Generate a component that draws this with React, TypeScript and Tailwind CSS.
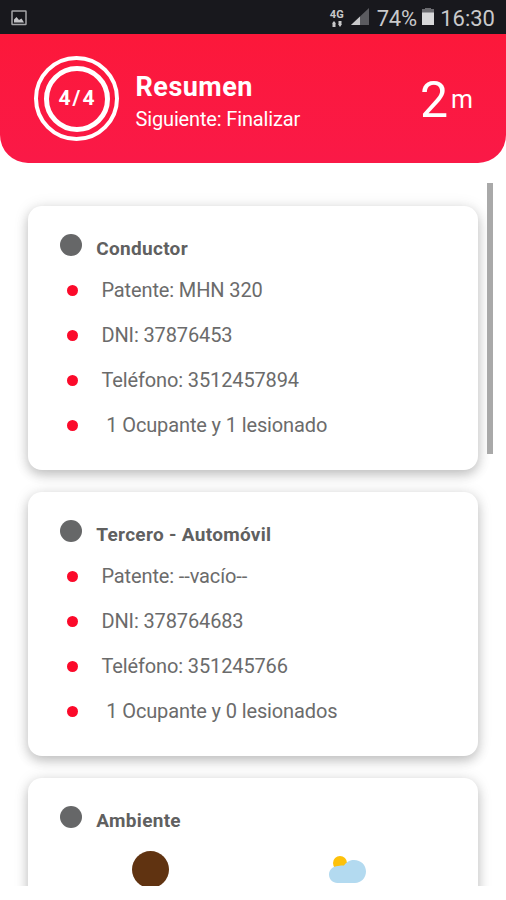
const sections = [
  {
    title: "Conductor",
    items: [
      "Patente: MHN 320",
      "DNI: 37876453",
      "Teléfono: 3512457894",
      "\u00a01 Ocupante y 1 lesionado",
    ],
  },
  {
    title: "Tercero - Automóvil",
    items: [
      "Patente: --vacío--",
      "DNI: 378764683",
      "Teléfono: 351245766",
      "\u00a01 Ocupante y 0 lesionados",
    ],
  },
];

const StatusBar = () => (
  <div className="flex h-[34px] items-center bg-[#18181d] pr-[11px] pl-[11px] text-[#c9c9cb]">
    <svg width="16" height="16" viewBox="0 0 16 16" className="mt-px">
      <rect x="1" y="1" width="14" height="13.5" rx="0.5" fill="none" stroke="#a5a5a8" strokeWidth="1.5" />
      <path d="M3 12.5V9.5L5.5 7L8 10L10.5 8.5L13 12.5Z" fill="#c4c4c7" />
    </svg>
    <div className="mt-px ml-auto flex w-4 flex-col items-center">
      <span className="text-[11px] leading-[12px] font-bold">4G</span>
      <svg width="10" height="6" viewBox="0 0 10 6">
        <path d="M0 2.500L2 0L4 2.500H3.500V6H0.500V2.500ZM6.500 0H9.500V3H10L8 6L6 3H6.500Z" fill="#c9c9cb" />
      </svg>
    </div>
    <svg width="18" height="18" viewBox="0 0 18 18" className="ml-[6px]">
      <path d="M18 0V17H0Z" fill="#5b5b60" />
      <path d="M9 8.500V17H0Z" fill="#c9c9cb" />
    </svg>
    <span className="mt-[3px] ml-[8px] text-[22px] leading-none tracking-[-0.3px]">74%</span>
    <svg width="12" height="18" viewBox="0 0 12 18" className="ml-[5px]">
      <path d="M3 0H9V1H12V5H0V1H3Z" fill="#6b6b70" />
      <path d="M0 4.500H12V17H0Z" fill="#d8d8da" />
    </svg>
    <span className="mt-[3px] ml-[6.500px] text-[22px] leading-none">16:30</span>
  </div>
);

const Header = () => (
  <header className="flex h-[129px] items-center rounded-b-[28px] bg-linear-to-b from-[#fc183a] to-[#fa1947] pr-[33px] pl-[34px] text-white">
    <div className="flex size-[85px] shrink-0 items-center justify-center rounded-full border-4 border-white">
      <div className="flex size-[66px] items-center justify-center rounded-full border-[5px] border-white">
        <span className="pl-[2px] text-[21px] font-bold tracking-[2px]">4/4</span>
      </div>
    </div>
    <div className="ml-[16.500px] pt-[7px]">
      <h1 className="text-[27px] leading-[34px] font-bold tracking-[0.5px]">Resumen</h1>
      <p className="text-[20px] leading-[30px] tracking-[-0.15px]">Siguiente: Finalizar</p>
    </div>
    <div className="ml-auto flex items-baseline pt-[2px]">
      <span className="text-[50px] leading-none">2</span>
      <span className="relative -top-[9px] ml-[3px] text-[25px] leading-none">m</span>
    </div>
  </header>
);

const Card = ({ title, children }: { title: string; children: React.ReactNode }) => (
  <section className="h-[264px] shrink-0 rounded-[14px] bg-white pt-[20px] pl-[31px] shadow-[0_5px_12px_rgba(0,0,0,0.2),0_1px_16px_rgba(0,0,0,0.1)]">
    <div className="flex h-[42px]">
      <span className="mt-[8px] ml-[0.500px] size-[22px] rounded-full bg-[#666768]" />
      <h2 className="ml-[14.500px] text-[19px] leading-[46px] font-bold tracking-[0.3px] text-[#606060]">{title}</h2>
    </div>
    {children}
  </section>
);

const App = () => {
  return (
    <div className="h-[900px] w-[506px] overflow-hidden bg-white font-['Roboto',sans-serif]">
      <StatusBar />
      <Header />
      <main className="mt-5 ml-[14px] flex h-[703px] w-[479px] overflow-hidden">
        <div className="ml-[14.300px] flex w-[450px] shrink-0 flex-col gap-[22px] pt-[22.800px]">
          {sections.map((section) => (
            <Card key={section.title} title={section.title}>
              <ul className="text-[20px] tracking-[-0.13px] text-[#6b6b6b]">
                {section.items.map((item) => (
                  <li key={item} className="flex h-[45px] items-center">
                    <span className="mt-px ml-[7.700px] size-[11px] rounded-full bg-[#fb0a2a]" />
                    <span className="-mt-[0.800px] ml-[23.500px]">{item}</span>
                  </li>
                ))}
              </ul>
            </Card>
          ))}
          <Card title="Ambiente">
            <div className="flex pt-[11px]">
              <svg width="37" height="37" viewBox="0 0 37 37" className="ml-[72.700px]">
                <circle cx="18.500" cy="18.500" r="18.500" fill="#603311" />
              </svg>
              <svg width="37" height="27" viewBox="0 0 37 27" className="mt-[5px] ml-[160px]">
                <circle cx="11" cy="7" r="7" fill="#fdc10a" />
                <path d="M9 10C11 9 13 9.500 15 9.500C18 5.500 21 4 25 4C32 4 37 9 37 15.500C37 22 32 27 26 27H8.500C3.500 27 0 23 0 18.500C0 14 4 10 9 10Z" fill="#b3daf0" />
              </svg>
            </div>
          </Card>
        </div>
        <div className="ml-[8.700px] h-[271px] w-[6px] shrink-0 bg-[#a9a9a9]" />
      </main>
    </div>
  );
};

export default App;
